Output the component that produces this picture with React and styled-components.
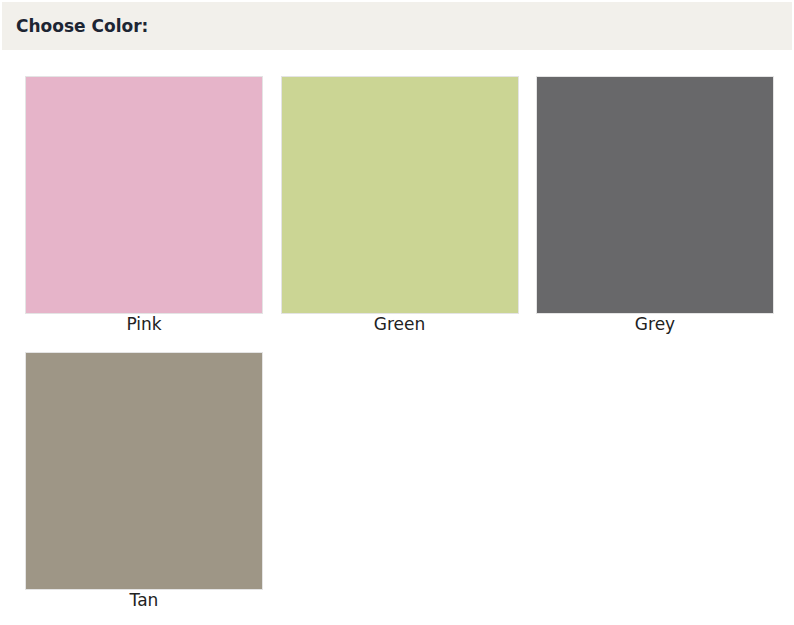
import React from "react";
import styled, { createGlobalStyle } from "styled-components";

const Global = createGlobalStyle`
  html, body { margin: 0; padding: 0; background: #fff; }
  body { font-family: "DejaVu Sans", Verdana, sans-serif; }
`;

const Page = styled.div`
  padding: 2px;
  width: 790px;
`;

const Header = styled.div`
  background: #f2f0eb;
  height: 48px;
  display: flex;
  align-items: center;
  padding-left: 14px;
  font-family: "DejaVu Sans", Verdana, sans-serif;
  font-weight: bold;
  font-size: 17px;
  color: #1d2533;
`;

const Grid = styled.div`
  display: grid;
  grid-template-columns: repeat(3, 238px);
  column-gap: 17.5px;
  row-gap: 18px;
  padding: 26px 0 0 23px;
`;

const Item = styled.div`
  display: flex;
  flex-direction: column;
  align-items: center;
`;

const Swatch = styled.div`
  width: 236px;
  height: 236px;
  border: 1px solid #e4e4e4;
  background: ${(p) => p.$color};
`;

const Label = styled.div`
  font-family: "DejaVu Sans", Verdana, sans-serif;
  font-size: 17px;
  line-height: 20px;
  color: #222;
`;

const colors = [
  { name: "Pink", color: "#e6b4c9" },
  { name: "Green", color: "#cbd594" },
  { name: "Grey", color: "#68686a" },
  { name: "Tan", color: "#9e9686" },
];

export default function App() {
  return (
    <Page>
      <Global />
      <Header>Choose Color:</Header>
      <Grid>
        {colors.map((c) => (
          <Item key={c.name}>
            <Swatch $color={c.color} />
            <Label>{c.name}</Label>
          </Item>
        ))}
      </Grid>
    </Page>
  );
}
